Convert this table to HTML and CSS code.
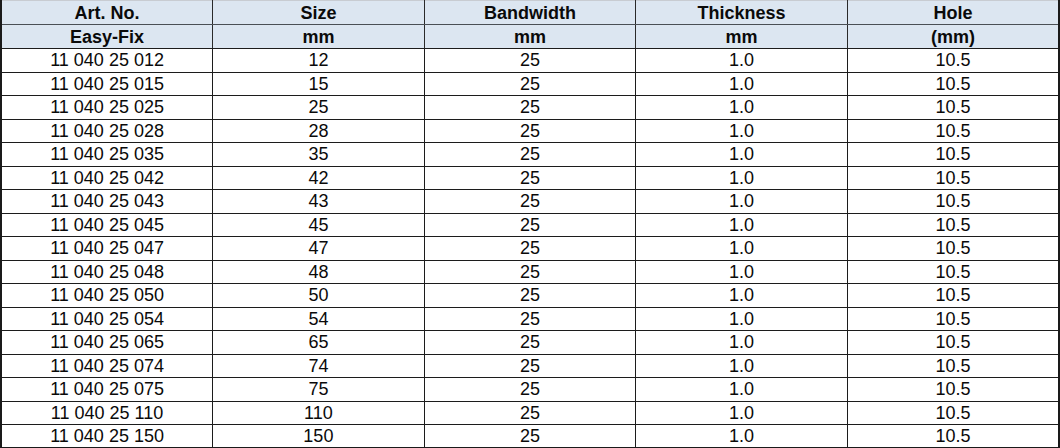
FILE: index.html
```html
<!DOCTYPE html>
<html>
<head>
<meta charset="utf-8">
<link rel="stylesheet" href="styles.css">
</head>
<body>
<table class="spec">
  <colgroup><col><col><col><col><col></colgroup>
  <thead>
    <tr class="head"><th>Art. No.</th><th>Size</th><th>Bandwidth</th><th>Thickness</th><th>Hole</th></tr>
    <tr class="head"><th>Easy-Fix</th><th>mm</th><th>mm</th><th>mm</th><th>(mm)</th></tr>
  </thead>
  <tbody>
    <tr><td>11 040 25 012</td><td>12</td><td>25</td><td>1.0</td><td>10.5</td></tr>
    <tr><td>11 040 25 015</td><td>15</td><td>25</td><td>1.0</td><td>10.5</td></tr>
    <tr><td>11 040 25 025</td><td>25</td><td>25</td><td>1.0</td><td>10.5</td></tr>
    <tr><td>11 040 25 028</td><td>28</td><td>25</td><td>1.0</td><td>10.5</td></tr>
    <tr><td>11 040 25 035</td><td>35</td><td>25</td><td>1.0</td><td>10.5</td></tr>
    <tr><td>11 040 25 042</td><td>42</td><td>25</td><td>1.0</td><td>10.5</td></tr>
    <tr><td>11 040 25 043</td><td>43</td><td>25</td><td>1.0</td><td>10.5</td></tr>
    <tr><td>11 040 25 045</td><td>45</td><td>25</td><td>1.0</td><td>10.5</td></tr>
    <tr><td>11 040 25 047</td><td>47</td><td>25</td><td>1.0</td><td>10.5</td></tr>
    <tr><td>11 040 25 048</td><td>48</td><td>25</td><td>1.0</td><td>10.5</td></tr>
    <tr><td>11 040 25 050</td><td>50</td><td>25</td><td>1.0</td><td>10.5</td></tr>
    <tr><td>11 040 25 054</td><td>54</td><td>25</td><td>1.0</td><td>10.5</td></tr>
    <tr><td>11 040 25 065</td><td>65</td><td>25</td><td>1.0</td><td>10.5</td></tr>
    <tr><td>11 040 25 074</td><td>74</td><td>25</td><td>1.0</td><td>10.5</td></tr>
    <tr><td>11 040 25 075</td><td>75</td><td>25</td><td>1.0</td><td>10.5</td></tr>
    <tr><td>11 040 25 110</td><td>110</td><td>25</td><td>1.0</td><td>10.5</td></tr>
    <tr><td>11 040 25 150</td><td>150</td><td>25</td><td>1.0</td><td>10.5</td></tr>
  </tbody>
</table>
</body>
</html>
```

FILE: styles.css
```css
html, body {
  margin: 0;
  padding: 0;
  background: #ffffff;
}

.spec {
  width: 1060px;
  border-collapse: collapse;
  table-layout: fixed;
  font-family: "Liberation Sans", Arial, sans-serif;
  font-size: 18px;
  color: #0a0a0a;
}

.spec th,
.spec td {
  border: 1px solid #1c1c1c;
  padding: 0;
  text-align: center;
  vertical-align: middle;
  line-height: 20px;
}

.spec .head {
  height: 24px;
}

.spec th {
  background: #dce6f1;
  font-weight: bold;
  border-left-color: #2a2a2a;
  border-right-color: #2a2a2a;
}

.spec thead tr:first-child th {
  border-top-color: #c8ccd2;
  border-bottom-color: #4a4f55;
}

.spec tbody tr {
  height: 23.5px;
}

.spec th:first-child,
.spec td:first-child {
  border-left: 2px solid #1a1a1a;
}

.spec th:last-child,
.spec td:last-child {
  border-right: 2px solid #1a1a1a;
}

.spec tbody tr:last-child td {
  border-bottom: 2px solid #1a1a1a;
}
```
